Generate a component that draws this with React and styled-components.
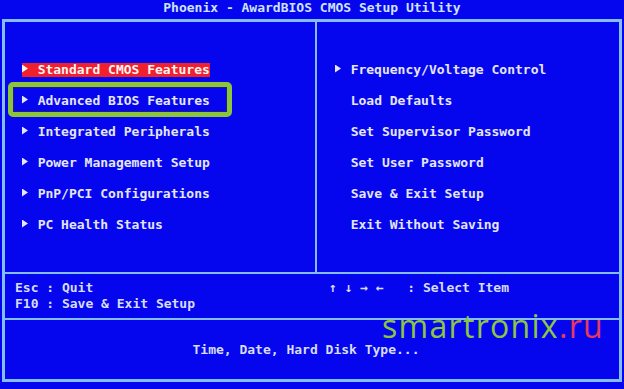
import React from 'react';
import styled, {createGlobalStyle} from 'styled-components';

const BIOS_BLUE = '#0606ee';
const LINE = '#84bcfa';
const TEXT = '#e4e6f6';

const GlobalStyle = createGlobalStyle`
  html, body {
    margin: 0;
    padding: 0;
    background: ${BIOS_BLUE};
  }
`;

const Screen = styled.div`
  position: relative;
  width: 624px;
  height: 389px;
  overflow: hidden;
  background: ${BIOS_BLUE};
  color: ${TEXT};
  font-family: "DejaVu Sans Mono", "Liberation Mono", monospace;
  font-weight: bold;
  font-size: 13px;
`;

const TitleBar = styled.div`
  height: 19px;
  line-height: 16px;
  text-align: center;
  color: #cfe2fb;
`;

const Frame = styled.div`
  margin: 0 2px;
  height: 363px;
  box-sizing: border-box;
  border: 3px solid ${LINE};
  display: flex;
  flex-direction: column;
`;

const MenuPanel = styled.div`
  height: 250px;
  display: grid;
  grid-template-columns: 310px 1fr;
`;

const Column = styled.div`
  padding: 32px 0 0 ${({ $indent }) => $indent}px;
  border-left: ${({ $divided }) => ($divided ? `2px solid ${LINE}` : 'none')};
`;

const Row = styled.div`
  position: relative;
  height: 31px;
  display: flex;
  align-items: center;
`;

const Label = styled.span`
  white-space: pre;
  line-height: 14px;
  color: ${({ $selected }) => ($selected ? '#fff4f4' : TEXT)};
  background: ${({ $selected }) => ($selected ? '#f0202c' : 'transparent')};
`;

const Pointer = styled.span`
  display: inline-block;
  width: 1ch;
  height: 8px;
  vertical-align: 1px;

  &::before {
    content: '';
    display: block;
    width: 6px;
    height: 8px;
    background: currentColor;
    clip-path: polygon(0 0, 100% 50%, 0 100%);
  }
`;

const Mark = styled.span`
  position: absolute;
  left: -14px;
  top: -3px;
  width: 224px;
  height: 35px;
  box-sizing: border-box;
  border: 5px solid #8cc43c;
  border-radius: 5px;
  box-shadow: inset 0 0 0 1px #1c1c8c;
  pointer-events: none;
`;

const HelpPanel = styled.div`
  height: 46px;
  border-top: 2px solid ${LINE};
  display: grid;
  grid-template-columns: 312px 1fr;
  padding-top: 6px;
  box-sizing: border-box;
  line-height: 16px;
  color: #d6def6;
`;

const HelpColumn = styled.div`
  white-space: pre;
  padding-left: ${({ $indent }) => $indent}px;
`;

const StatusPanel = styled.div`
  flex: 1;
  border-top: 2px solid ${LINE};
  display: flex;
  align-items: center;
  justify-content: center;
  padding-right: 12px;
  color: #d6def6;
`;

const Watermark = styled.div`
  position: absolute;
  left: 382px;
  top: 310px;
  font-family: "Open Sans", "Noto Sans", sans-serif;
  font-weight: 400;
  font-size: 32px;
  line-height: 1;
  letter-spacing: 1.3px;
  color: #8cc63f;

  span {
    color: #e6385a;
  }
`;

const Item = ({ arrow, selected, marked, children }) => (
  <Row>
    {marked && <Mark />}
    <Label $selected={selected}>
      {arrow ? <><Pointer />{' '}</> : '  '}
      {children}
    </Label>
  </Row>
);

const leftItems = [
  { text: 'Standard CMOS Features', selected: true },
  { text: 'Advanced BIOS Features', marked: true },
  { text: 'Integrated Peripherals' },
  { text: 'Power Management Setup' },
  { text: 'PnP/PCI Configurations' },
  { text: 'PC Health Status' },
];

const rightItems = [
  { text: 'Frequency/Voltage Control', arrow: true },
  { text: 'Load Defaults' },
  { text: 'Set Supervisor Password' },
  { text: 'Set User Password' },
  { text: 'Save & Exit Setup' },
  { text: 'Exit Without Saving' },
];

export default function App() {
  return (
    <Screen>
      <GlobalStyle />
      <TitleBar>Phoenix - AwardBIOS CMOS Setup Utility</TitleBar>
      <Frame>
        <MenuPanel>
          <Column $indent={17}>
            {leftItems.map(item => (
              <Item key={item.text} arrow selected={item.selected} marked={item.marked}>
                {item.text}
              </Item>
            ))}
          </Column>
          <Column $indent={18} $divided>
            {rightItems.map(item => (
              <Item key={item.text} arrow={item.arrow}>{item.text}</Item>
            ))}
          </Column>
        </MenuPanel>
        <HelpPanel>
          <HelpColumn $indent={10}>
            {'Esc : Quit\nF10 : Save & Exit Setup'}
          </HelpColumn>
          <HelpColumn $indent={12}>{'↑ ↓ → ←   : Select Item'}</HelpColumn>
        </HelpPanel>
        <StatusPanel>Time, Date, Hard Disk Type...</StatusPanel>
      </Frame>
      <Watermark>smartronix<span>.ru</span></Watermark>
    </Screen>
  );
}
